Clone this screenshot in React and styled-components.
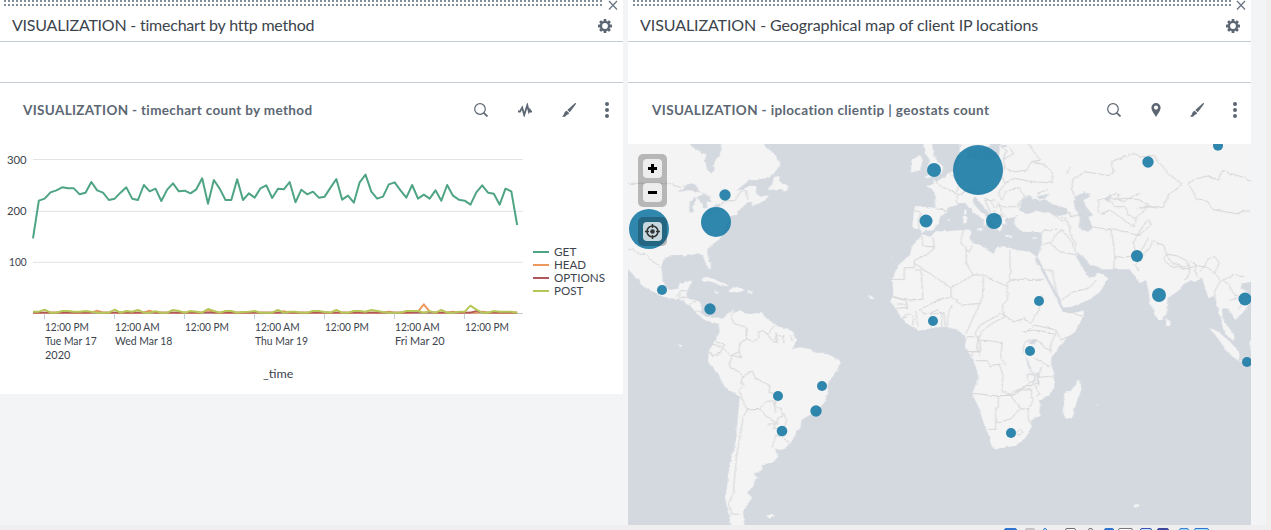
import React from 'react';
import styled, { createGlobalStyle } from 'styled-components';

const Global = createGlobalStyle`
  * { box-sizing: border-box; }
  body { margin: 0; background: #f2f4f5; overflow: hidden; font-family: Lato, "Open Sans", sans-serif; color: #3c444d; }
`;
const Page = styled.div`
  height: 530px; display: flex; flex-direction: column;
`;
const Board = styled.main`
  height: 525px; display: flex; align-items: flex-start; gap: 5px;
`;
const Panel = styled.section`
  width: 623px; height: ${p => p.$height}px; background: #fff; flex: none; overflow: hidden;
`;
const Edge = styled.div`
  width: 5px; height: 525px; margin-left: auto; background: #f1f0ef;
`;
const DragRow = styled.div`
  height: 10px; display: flex; align-items: flex-start; justify-content: space-between; padding: 0 5px 0 ${p => p.$inset}px;
`;
const Dots = styled.div`
  width: 598px; height: 6px;
  background-image: linear-gradient(#fff, #fff), repeating-linear-gradient(90deg, #818d99 0 2px, #fff 2px 4px);
  background-size: 100% 2px, 100% 100%;
  background-position: 0 2px, 0 0;
  background-repeat: no-repeat;
`;
const Header = styled.header`
  height: 32px; display: flex; align-items: center; justify-content: space-between;
  padding: 0 11px 0 12px; border-bottom: 1px solid #c3cbd4;
`;
const Title = styled.h2`
  margin: 0; padding-bottom: 2px; font-size: 16px; line-height: 20px; font-weight: 400; white-space: nowrap;
  letter-spacing: ${p => p.$spacing}px;
`;
const InputRow = styled.div`
  height: 41px; border-bottom: 1px solid #c3cbd4;
`;
const ElementHead = styled.div`
  height: 61px; padding: 0 14px 8px ${p => p.$inset}px; display: flex; align-items: center; justify-content: space-between;
`;
const Subtitle = styled.h3`
  margin: 0; font-size: 13.5px; line-height: 18px; font-weight: 700; color: #5c6773; white-space: nowrap;
  letter-spacing: ${p => p.$spacing}px;
`;
const Actions = styled.div`
  display: flex; align-items: center;
`;
const Gap = styled.span`
  width: ${p => p.$w}px;
`;
const MapArea = styled.div`
  position: relative; height: 381px; background: #d4d9e0;
`;
const Controls = styled.div`
  position: absolute; left: 10px; top: ${p => p.$top}px; width: 29px; padding: 5px;
  display: flex; flex-direction: column; gap: 5px; border-radius: 5px; background: rgba(0,0,0,.25);
`;
const MapButton = styled.button`
  width: 19px; height: 19px; padding: 0; border: 0; border-radius: 4px; background: rgba(255,255,255,.75);
  display: flex; align-items: center; justify-content: center;
`;
const Taskbar = styled.footer`
  height: 5px; background: #efefef; padding: 3px 0 0 1004px; display: flex;
`;
const Task = styled.span`
  height: 4px; flex: none; width: ${p => p.$w}px; margin-right: ${p => p.$gap}px;
  border: 1px solid ${p => p.$c}; border-radius: 2px 2px 0 0; background: ${p => p.$fill || '#efefef'};
`;
const ChartSvg = styled.svg`
  display: block; margin-top: -4px; font-family: Lato, sans-serif; fill: #3c444d;
`;
const MapSvg = styled.svg`
  display: block;
`;

const CloseIcon = () => (
  <svg width="10" height="10" viewBox="0 0 10 10"><path d="M1 1 9 9.5M9 1 1 9.5" stroke="#6b7785" strokeWidth="1.3" fill="none" /></svg>
);
const GearIcon = () => (
  <svg width="14" height="14" viewBox="0 0 14 14">
    <g fill="#5c6773">
      {[0, 45, 90, 135].map(a => <rect key={a} x="5.6" y="0" width="2.8" height="14" rx=".5" transform={`rotate(${a} 7 7)`} />)}
      <circle cx="7" cy="7" r="5.2" />
    </g>
    <circle cx="7" cy="7" r="2.9" fill="#fff" />
  </svg>
);
const SearchIcon = () => (
  <svg width="14" height="14" viewBox="0 0 14 14" fill="none" stroke="#5c6773"><circle cx="6" cy="6" r="5.3" strokeWidth="1.2" /><path d="m9.8 9.8 3.7 3.6" strokeWidth="1.8" /></svg>
);
const PulseIcon = () => (
  <svg width="14" height="14" viewBox="0 0 14 14" fill="none" stroke="#5c6773" strokeWidth="1.8"><path d="M0 8.5h2L4.2 4.6 6.2 12 9.3 2.2l1.6 6.6.9-2 .8 1.7H14" /></svg>
);
const BrushIcon = () => (
  <svg width="14" height="14" viewBox="0 0 14 14" fill="#5c6773"><path d="M14 .2c.2.3 0 .8-.4 1.4L7.8 9.3 5.3 7 12 1c.8-.7 1.6-1.1 2-.8ZM4.6 7.7l2.5 2.4c-.3 1-1 1.5-1.8 1.5L3 13.8H0l2-2.6c.2-1.7 1.2-3 2.6-3.5Z" /></svg>
);
const PinIcon = () => (
  <svg width="10" height="14" viewBox="0 0 10 14" fill="#5c6773"><path fillRule="evenodd" d="M5 0a4.6 4.6 0 0 0-4.6 4.7C.4 8 3.5 11 5 14c1.5-3 4.6-6 4.6-9.3A4.6 4.6 0 0 0 5 0Zm0 2.5a2.1 2.1 0 1 1 0 4.2 2.1 2.1 0 0 1 0-4.2Z" /></svg>
);
const MoreIcon = () => (
  <svg width="4" height="16" viewBox="0 0 4 16" fill="#5c6773"><circle cx="2" cy="2" r="2" /><circle cx="2" cy="8" r="2" /><circle cx="2" cy="14" r="2" /></svg>
);

const getSeries = [295,182,176,157,151,142,145,145,163,158,126,151,158,180,176,158,142,176,180,135,154,146,183,149,130,154,152,160,148,115,191,120,146,180,180,118,180,160,173,145,136,174,146,148,126,187,149,163,155,173,170,143,117,179,167,188,127,104,155,176,170,133,127,151,173,135,176,164,176,151,182,135,167,179,182,194,157,136,158,161,194,146,154,255];
const bumps = { 0:515, 1:515, 2:509, 5:513, 6:513, 7:515, 8:515, 9:513, 10:515, 14:509, 16:513, 17:515, 18:510, 21:514, 24:510, 25:513, 27:513, 28:515, 30:507, 31:513, 33:513, 34:513, 36:516, 37:515, 38:513, 42:510, 44:515, 45:515, 48:513, 49:513, 50:516, 52:510, 55:513, 56:513, 57:515, 58:510, 59:513, 60:516, 64:513, 65:513, 66:513, 68:514, 70:510, 73:515, 74:515, 75:497, 76:509, 79:513, 80:515, 81:515, 82:515 };
const heads = { 11:512, 20:512, 30:511, 43:514, 61:515, 66:515, 67:493, 68:515, 72:515, 77:515 };
const linePoints = values => values.map((v, i) => `${99 + i * 17.5},${v}`).join(' ');
const flat = (map, base) => linePoints(getSeries.map((_, i) => map[i] || base));
const ticks = [
  [134, '12:00 PM', 'Tue Mar 17', '2020'], [344, '12:00 AM', 'Wed Mar 18'], [554, '12:00 PM'],
  [764, '12:00 AM', 'Thu Mar 19'], [974, '12:00 PM'], [1184, '12:00 AM', 'Fri Mar 20'], [1394, '12:00 PM'],
];
const widths = { 'Tue Mar 17': 155, 'Wed Mar 18': 172, 'Thu Mar 19': 159, 'Fri Mar 20': 149, '2020': 76, '12:00 PM': 132, '12:00 AM': 134 };
const legend = [['GET', '#4fa484', 67], ['HEAD', '#ec9960', 96], ['OPTIONS', '#af575a', 153], ['POST', '#b6c75a', 88]];

const Chart = () => (
  <ChartSvg width="623" height="254" viewBox="0 0 1869 762">
    {[58.5, 214, 367].map(y => <path key={y} d={`M99 ${y}H1569`} stroke="#e1e3e5" strokeWidth="3" />)}
    {[[300, 71], [200, 224], [100, 377]].map(([n, y]) => <text key={n} x="80" y={y} fontSize="34" textAnchor="end" textLength={n === 100 ? 53 : 59} lengthAdjust="spacingAndGlyphs">{n}</text>)}
    <path d="M99 520.5H1569" stroke="#c3cbd4" strokeWidth="3" />
    <g fill="none" strokeWidth="6" strokeLinejoin="round">
      <polyline points={linePoints(getSeries)} stroke="#4fa484" />
      <polyline points={flat(heads, 518)} stroke="#ec9960" />
      <polyline points={flat({ 76: 513 }, 518)} stroke="#af575a" strokeWidth="5" />
      <polyline points={flat(bumps, 518)} stroke="#b6c75a" />
    </g>
    {ticks.map(([x, ...lines]) => (
      <g key={x}>
        <path d={`M${x - .5} 521V537`} stroke="#c3cbd4" strokeWidth="3" />
        {lines.map((t, i) => <text key={t} x={x + 1} y={572 + i * 42} fontSize="33" textLength={widths[t]} lengthAdjust="spacingAndGlyphs">{t}</text>)}
      </g>
    ))}
    <text x="789" y="714" fontSize="36" textLength="91" lengthAdjust="spacingAndGlyphs">_time</text>
    {legend.map(([name, color, w], i) => (
      <g key={name}>
        <path d={`M1599 ${336 + i * 39}H1647`} stroke={color} strokeWidth="6" />
        <text x="1662" y={348 + i * 39} fontSize="35" textLength={w} lengthAdjust="spacingAndGlyphs">{name}</text>
      </g>
    ))}
  </ChartSvg>
);

const americas = [
  'M-20 0 185 0 187 18 210 30 235 45 230 60 238 90 250 100 260 90 258 72 262 60 275 45 280 25 278 0 400 0 415 22 435 38 455 65 457 78 445 92 425 112 385 120 365 120 345 135 325 152 345 148 365 137 385 138 384 158 396 170 420 165 420 173 395 190 370 197 373 185 355 188 345 200 330 212 325 225 305 228 300 240 295 255 285 280 275 297 260 308 240 324 237 335 240 350 248 372 248 388 240 385 230 362 225 345 210 340 190 345 180 342 170 350 155 345 130 345 108 356 100 380 103 410 112 440 130 450 150 445 155 430 190 422 190 430 180 445 175 465 180 475 200 480 215 485 222 500 218 520 235 530 255 533 272 532 285 536 300 520 320 508 320 520 335 510 345 515 370 522 400 516 410 530 430 545 450 560 475 565 495 575 505 605 490 627 515 622 550 628 555 638 590 638 625 655 635 665 630 685 605 720 598 735 600 760 590 785 570 810 545 825 520 840 518 860 505 880 490 905 475 925 455 930 440 925 450 950 435 968 402 973 403 990 380 1000 385 1010 375 1040 357 1055 372 1073 355 1100 345 1115 350 1165 310 1155 300 1115 292 1075 298 1035 305 970 320 920 328 850 335 770 290 740 270 700 240 665 243 630 260 605 275 575 272 552 250 545 230 540 205 520 190 500 170 485 150 478 130 475 105 470 75 455 40 435 30 420-20 365Z',
  'M438 110 456 108 453 122 480 137 482 150 465 155 460 147 415 150 433 132Z',
  'M213 419 235 410 260 418 275 425 305 437 280 439 262 429 240 423Z',
  'M300 456 320 438 348 450 330 457Z M258 454l16 3-10 4Z M358 454h16v4h-16Z',
  'M415 1127 432 1122 440 1128 422 1137Z M152 612l12 5-8 5Z M378 1007l12 3-8 8Z',
];
const oldWorld = [
  'M480 0 478 45 460 58 430 62 400 52 385 60 385 30 370 15 360 20 355 60 345 90 325 98 310 112 290 125 282 118 280 132 258 138 280 150 288 175 285 203 225 198 220 225 217 265 240 268 248 280 262 272 280 270 297 245 300 232 325 212 325 200 345 198 360 190 375 188 388 205 410 225 432 238 431 260 443 248 448 237 420 213 400 190 398 175 407 170 430 200 450 220 455 240 465 262 480 275 487 262 482 248 498 254 495 237 525 230 524 255 545 275 575 275 605 278 605 310 592 350 600 365 628 420 660 475 668 503 695 500 745 480 780 455 805 415 780 400 770 395 765 410 745 413 720 370 710 350 715 340 735 355 750 375 775 380 785 388 870 388 885 412 900 430 918 420 925 450 930 490 952 540 965 540 980 520 982 475 1005 460 1035 430 1055 420 1070 425 1085 412 1095 440 1105 475 1120 468 1130 490 1140 530 1145 550 1155 580 1180 603 1182 582 1160 555 1148 535 1146 505 1160 505 1175 520 1185 540 1215 510 1235 480 1220 455 1202 445 1205 430 1250 423 1250 0Z',
  'M248 283 270 290 290 275 330 272 370 270 385 268 395 275 388 295 400 310 430 318 445 335 462 338 470 320 490 318 530 330 570 335 590 350 585 362 600 385 620 420 645 465 655 490 668 515 690 520 732 512 730 530 705 575 680 595 650 630 635 650 632 670 642 700 643 745 630 760 600 782 598 828 575 840 575 860 555 895 525 918 495 922 465 928 452 910 448 890 435 860 425 830 420 810 400 770 398 755 415 715 408 680 395 655 375 620 378 600 375 590 355 570 325 560 290 562 235 572 200 550 175 520 160 495 150 485 160 470 158 430 153 422 175 375 210 345 215 320 240 290Z',
  'M717 718 725 745 710 785 698 830 680 837 667 820 672 790 672 760 695 750Z',
  'M248 0 275 0 280 40 290 60 310 80 305 100 280 110 255 115 265 100 262 80 270 60 255 40Z M215 60 240 45 248 60 240 90 212 98Z M325 0h125v20l-50 15-35-20Z',
  'M368 228h12v20l-9 3Z M373 208l7 3-2 14-6-4Z M405 265l26-2-4 12Z M495 284l22 3v3h-20Z M572 294l20-4-8 7Z',
  'M978 530 992 545 990 558 978 558Z M1110 563 1135 575 1170 605 1190 628 1200 646 1195 662 1165 640 1143 608Z M1155 570l18 12 7 18-15-8Z M1228 605l20-20v45h-16Z M1195 660h45v10Z',
  'M765 795l6-3v5Z M885 1093l12 2-8 8-4-1Z M148 355l8-2v4Z M165 357l14-2Z M85 465l18 8-12 6Z M320 240l12-3-6 7Z',
];
const seas = [
  'M537 210 545 180 570 165 580 178 600 184 612 178 645 195 680 205 685 222 655 228 630 220 590 213 560 223Z M590 170 630 160 615 175 600 178Z',
  'M705 170 730 157 750 160 748 172 730 180 735 195 750 215 760 225 745 230 755 255 755 270 730 272 715 262 720 235 705 205 700 185Z M793 178l22-17-10 17 5 10-10-5Z',
  'M485 15h18v6h-18Z M568 602l12-4 12 0-8 16-15-4Z M556 650l8 10 10 30 10 10-5 2-14-18Z M591 695l8 10-2 33-6-14Z',
];
const lakes = 'M147 157 165 148 180 132 198 134 215 148 205 158 185 150Z M184 218 185 185 200 170 205 177 193 200 198 214Z M205 172 225 163 242 170 252 185 235 185 238 200 225 207 219 187Z M225 225 245 212 263 207 250 218Z M252 203 265 192 285 190 272 202Z';
const americanBorders = 'M0 130H120L135 135 160 143M165 137 215 155 245 170M280 190l18-8h22l20-30h15l5 27M0 330l15-5 20 20 15-5 25 25 25 17M145 470l12-18h20m-20 8-5 20m5-5 25-5m5 25 10-10 20-3m-15 30 15 4M320 510l-12 20 10 20 36 12 3 35-22 12-2 28 8 16-35-8-25-25-30-8M355 565h3l-4 28 18 12 22-10-5-20 15-3 15 10 20-25m-20 25 10 16 18 10-3-32M440 600l4-12 25-1m-5 0 4 22m25-7-5-17M260 605l30 8-15 27-25 8-5-12M335 635l-20 8-12 28 8 15 20 7 14 15 28-15 8 20 45 24-3 20 20 5v35l17 10 4 22-15 5-2 18-28 0M345 705l-5 20 5 12-12 13 10 30 15 30 40-2 5-15 18-10h18l3 35M358 810l-12 20-10 60-10 55-6 60-4 55-15 30 10 32 25 1M398 808l15 20 30 18-8 20 35-3 5-22-8-22M445 883l-8 22-5 18M445 885l40 20';
const oldBorders = 'M285 125l20 15 35 15 15 10-8 15 8 12M325 100l35 25-10 30M355 165l30-15 35 10M225 212l18 4-8 28 2 25M285 203l40 10M478 12l20 20-8 25 30-15-10-20M490 55l5 30 30 10 35-5 15-25 25-5-35-48M495 75l-10 30 10 25 30-15 50 10 60 3 5-25-25-30-35-5M495 130l-20 30 10 20 15-28 35-10 20 30-15 8-5 20-50 0-15-15M430 175l20 5 15 25 12-12 10 30-30 10M465 180l-30 0 20 45m5-15 8 20 26-2M525 230l10-8M603 280l10-8 40-5M605 315l30-10 20-30 10-8M590 345l15-20M245 288l4 30 34 3-5-29M283 321l-10 15-50 25v22h-30v35h-40M223 370 333 443M243 390l6 88-48 2-43-10M243 390h-18M333 443v27l-50 15-45 25 15 10h15l30-12M333 443l67-38-22-35 2-40-18-25 8-35M378 328l12 7 5-20M400 405l30 0 72 35v-15h8l0-95M512 418H612M502 440v40l-15 15 5 30 30 20 30-10 20 15 25-40 10-45M430 410l-2 60-20 45-30 65M333 470l30 25 60-5M320 560l6-45 10-20M305 560v-40h-32v40M298 520l14 1 3 38M158 470l40 12 5 20-35 3m0-13h30m-10 40 18-12 15 15-5 22m-15-27-18 6m45-25 5 50M415 600l-10-20 15-25 65-35 10 10-40 20-30 25-10 25 40 3 32 5-5 45 15 20M380 590h35l-5 35 10 20M380 595h-5M380 635h35v-15m-38 25h20v-10m0 0h25l-2-30M405 662h35l10 15 30-5 8 35-3 45 20 10 50-20 15-15 15-3v-18l-20-5-5 20M400 760l75 8 50-5 30-25 23-3 10-35 8 8 0 20-12 5 15 30-10 5M475 768v35h-8v65h-25M475 768l35-3 30 40-25 30-45 15M540 805l25 5 12-20-3-45-30 5-30 18M565 810v30l10 15M530 877l12-8 7 8-12 9-8-5ZM548 640l5-30 10-10h25l45 35v-25l15-30-65-10-35 5M553 580l30-25 65 15 15 30 45-20 22-50-60-20M585 655l45 25M595 712l50-5M605 680l-10 25M600 390l35 0 15 65M665 480l35-25 45-10 25-25M655 275l15-5 30 45 10 30-50-10-30-25M705 170l-10-25 5-30 35-20 70 12 15-8-5-35 70-25 15 12 40-5 45 55 42 32-40 30-18 40-30-5-45 8 35-12-35-15-35-5-35 5-15-8 10-8 22 0-10 10 20 12 30-18 18-7M1045 128l20-10 35-10 35 12 10-28 65 20 20 12 20 5M1045 128l25 48 30 5 20 28 70 12 20-8 20 0M775 222v-40l30-10 20 28 30 0 10 25 20 10 40-35 25 4M890 235l-10 25-70-50-30 12M685 230l40-5 30 35 60 10 10 80-5 38M685 220l-35-10-10-10M665 230l22 20 3 30 20 40M820 350h50l15-20-5-22 25-45 20-25 10 15-30 25-10 8-78-20M870 350l35-20 20-38M895 390l-10-15 40-50 15-20 30 10 10 28-10 14 20 20 50 10 30-10 30 5 22 15M980 342l30 5 30 15 8 15-15 4-40-15ZM1048 375l0 25-12 20M1050 365l20 10-5 18 10 20M1080 395l15-20 10-20 20-5 13 20-15 30 20 20-20 35 5 40M1148 420l20 15 15 30 20 5-5 15m-50-65 30-15 35 5M1170 480l20-5 15 15-10 20M680 100l10-20m-95 80 25-12m25 50 40 15 10 20m-65-15 20 12 20 15';
const pins = [[63,267,60],[264,246,45],[291,165,17],[102,450,15],[246,507,17],[450,768,15],[582,738,15],[564,813,17],[462,873,16],[1050,90,75],[918,90,21],[894,243,19.5],[1098,243,24],[1233,483,15],[915,543,15],[1560,66,17],[1770,17,15],[1527,348,18],[1593,465,21],[1851,477,19.5],[1206,633,15],[1149,879,15],[1857,666,15]];

const WorldMap = () => (
  <MapSvg width="623" height="381" viewBox="0 12 1869 1143">
    <defs>
      <filter id="coast" x="0" y="0" width="1869" height="1160" filterUnits="userSpaceOnUse" colorInterpolationFilters="sRGB">
        <feTurbulence type="fractalNoise" baseFrequency=".07" numOctaves="2" seed="4" />
        <feDisplacementMap in="SourceGraphic" scale="9" xChannelSelector="R" yChannelSelector="G" />
      </filter>
    </defs>
    <g filter="url(#coast)">
      <g fill="#f4f4f4">
        {americas.map(d => <path key={d} d={d} />)}
        <g transform="translate(636 0)">{oldWorld.map(d => <path key={d} d={d} />)}</g>
      </g>
      <g fill="#d4d9e0">
        <path d={lakes} />
        <g transform="translate(636 0)">{seas.map(d => <path key={d} d={d} />)}</g>
      </g>
      <g fill="none" stroke="#d5d6d8" strokeWidth="3">
        <path d={americanBorders} />
        <path d={oldBorders} transform="translate(636 0)" />
      </g>
    </g>
    {pins.map(([x, y, r]) => <circle key={`${x}-${y}`} cx={x} cy={y} r={r} fill="#1e7da6" fillOpacity=".92" />)}
  </MapSvg>
);

const VizPanel = ({ height, dragInset, title, spacing, name, nameSpacing, inset, middle, gaps, children }) => (
  <Panel $height={height}>
    <DragRow $inset={dragInset}><Dots /><CloseIcon /></DragRow>
    <Header><Title $spacing={spacing}>{title}</Title><GearIcon /></Header>
    <InputRow />
    <ElementHead $inset={inset}>
      <Subtitle $spacing={nameSpacing}>{name}</Subtitle>
      <Actions><SearchIcon /><Gap $w={gaps[0]} />{middle}<Gap $w={gaps[1]} /><BrushIcon /><Gap $w={gaps[2]} /><MoreIcon /></Actions>
    </ElementHead>
    {children}
  </Panel>
);

export default function App() {
  return (
    <Page>
      <Global />
      <Board>
        <VizPanel height={394} dragInset={4} title="VISUALIZATION - timechart by http method" spacing={-0.22} name="VISUALIZATION - timechart count by method" nameSpacing={0.34} inset={23} middle={<PulseIcon />} gaps={[30, 30, 29]}>
          <Chart />
        </VizPanel>
        <VizPanel height={525} dragInset={5} title="VISUALIZATION - Geographical map of client IP locations" spacing={-0.09} name="VISUALIZATION - iplocation clientip | geostats count" nameSpacing={0.38} inset={24} middle={<PinIcon />} gaps={[30, 29, 29]}>
          <MapArea>
            <WorldMap />
            <Controls $top={10}>
              <MapButton aria-label="Zoom in"><svg width="9" height="9"><path d="M4.5 0v9M0 4.5h9" stroke="#000" strokeWidth="3" /></svg></MapButton>
              <MapButton aria-label="Zoom out"><svg width="9" height="9"><path d="M0 4.5h9" stroke="#000" strokeWidth="3" /></svg></MapButton>
            </Controls>
            <Controls $top={73}>
              <MapButton aria-label="Locate"><svg width="15" height="15" viewBox="0 0 15 15" fill="none" stroke="#333" strokeWidth="1.5"><circle cx="7.5" cy="7.5" r="5.5" /><circle cx="7.5" cy="7.5" r="2.3" fill="#333" stroke="none" /><path d="M7.5 0v4M7.5 11v4M0 7.5h4M11 7.5h4" /></svg></MapButton>
            </Controls>
          </MapArea>
        </VizPanel>
        <Edge />
      </Board>
      <Taskbar>
        <Task $w={13} $gap={8} $c="#2f74d0" $fill="#2f74d0" /><Task $w={10} $gap={8} $c="#c0c0c0" $fill="#ccc" />
        <Task $w={4} $gap={18} $c="#2f74d0" /><Task $w={11} $gap={12} $c="#707070" $fill="#fff" />
        <Task $w={5} $gap={11} $c="#777" /><Task $w={10} $gap={4} $c="#2f74d0" $fill="#2f74d0" />
        <Task $w={15} $gap={7} $c="#777" $fill="#fff" /><Task $w={12} $gap={5} $c="#3951b8" $fill="#c7e0f5" />
        <Task $w={12} $gap={10} $c="#3f479d" $fill="#3f479d" /><Task $w={10} $gap={5} $c="#3b82d3" $fill="#a9d5f5" />
        <Task $w={15} $gap={0} $c="#2f74d0" $fill="#a9e0fa" />
      </Taskbar>
    </Page>
  );
}
